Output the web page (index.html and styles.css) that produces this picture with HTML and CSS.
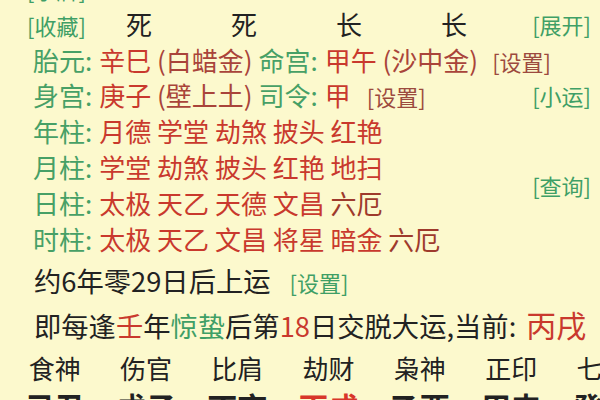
FILE: index.html
```html
<!DOCTYPE html>
<html lang="zh-CN">
<head>
<meta charset="utf-8">
<title>排盘</title>
<link rel="stylesheet" href="styles.css">
</head>
<body>
<main class="page">
  <section class="sheet">
    <div class="row at-1 top"><span class="link green">[字牌]</span></div>
    <div class="row at-2 top">
      <span class="link green head-link">[收藏]</span><span class="cell">死</span><span class="cell">死</span><span class="cell">长</span><span class="cell">长</span>
    </div>
    <div class="side at-2"><span class="link green">[展开]</span></div>

    <div class="row at-3"><span class="lbl">胎元:</span><span class="val">辛巳</span> <span class="paren">(白蜡金)</span> <span class="lbl">命宫:</span><span class="val">甲午</span> <span class="paren">(沙中金)</span><span class="link brown set">[设置]</span></div>

    <div class="row at-4"><span class="lbl">身宫:</span><span class="val">庚子</span> <span class="paren">(壁上土)</span> <span class="lbl">司令:</span><span class="val">甲</span><span class="link brown set set-2">[设置]</span></div>
    <div class="side at-4"><span class="link green">[小运]</span></div>

    <div class="row at-5"><span class="lbl">年柱:</span><span class="val">月德 学堂 劫煞 披头 红艳</span></div>
    <div class="row at-6"><span class="lbl">月柱:</span><span class="val">学堂 劫煞 披头 红艳 地扫</span></div>
    <div class="side span-6-8"><span class="link green">[查询]</span></div>
    <div class="row at-7"><span class="lbl">日柱:</span><span class="val">太极 天乙 天德 文昌 <span class="dark">六厄</span></span></div>
    <div class="row at-8"><span class="lbl">时柱:</span><span class="val">太极 天乙 文昌 将星 暗金 <span class="dark">六厄</span></span></div>
  </section>

  <section class="lower">
    <div class="line run">约6年零29日后上运<span class="link green run-set">[设置]</span></div>
    <div class="line dayun">即每逢<span class="red">壬</span>年<span class="green">惊蛰</span>后第<span class="red">18</span>日交脱大运,当前: <span class="red now">丙戌</span></div>
    <div class="gods">
      <span>食神</span><span>伤官</span><span>比肩</span><span>劫财</span><span>枭神</span><span>正印</span><span>七杀</span>
    </div>
    <div class="gods pillars">
      <span>己丑</span><span>戊子</span><span>丁亥</span><span class="red">丙戌</span><span>乙酉</span><span>甲申</span><span>癸未</span>
    </div>
  </section>
</main>
</body>
</html>
```
FILE: styles.css
```css
html, body {
  margin: 0;
  padding: 0;
}
body {
  width: 600px;
  height: 400px;
  overflow: hidden;
  background: #fcf9cd;
  font-family: "Noto Sans CJK SC", "Noto Sans", sans-serif;
  color: #2a2a2a;
}
.page {
  width: 600px;
}
.sheet {
  display: grid;
  grid-template-columns: 1fr 80px;
  grid-auto-rows: 35.8px;
  margin-top: -30px;
}
.row {
  grid-column: 1 / -1;
  padding-left: 33px;
  font-size: 26px;
  line-height: 35.8px;
  white-space: nowrap;
}
.row.top {
  padding-left: 27px;
}
.at-1 { grid-row: 1; }
.at-2 { grid-row: 2; }
.at-3 { grid-row: 3; }
.at-4 { grid-row: 4; }
.at-5 { grid-row: 5; }
.at-6 { grid-row: 6; }
.at-7 { grid-row: 7; }
.at-8 { grid-row: 8; }
.span-6-8 { grid-row: 6 / 8; }

.side {
  grid-column: 2;
  align-self: center;
  justify-self: end;
  padding-right: 9px;
  line-height: 1;
}

.link {
  font-size: 22px;
}
.green { color: #3f9f66; }
.brown { color: #9c4a3e; }
.red { color: #c9392d; }

.head-link {
  display: inline-block;
  width: 59.5px;
}
.cell {
  display: inline-block;
  width: 105px;
  text-align: center;
  color: #222;
}

.lbl {
  color: #47a066;
  margin-right: 7px;
}
.val {
  color: #c9392d;
}
.val .dark {
  color: #9e3a2c;
}
.paren {
  color: #a9443a;
}
.set {
  margin-left: 14px;
}
.set.set-2 {
  margin-left: 16px;
}

.lower {
  padding-top: 3px;
}
.line {
  height: 43.5px;
  line-height: 43.5px;
  padding-left: 34px;
  font-size: 27.3px;
  white-space: nowrap;
  color: #222;
}
.run-set {
  margin-left: 19px;
}
.now {
  font-size: 30px;
  margin-left: 4px;
}
.gods {
  display: grid;
  grid-template-columns: repeat(7, 91.3px);
  padding-left: 9px;
  height: 43.5px;
  align-items: center;
  font-size: 26px;
  line-height: 1;
  white-space: nowrap;
  color: #222;
}
.gods span {
  text-align: center;
}
.pillars {
  height: 32px;
  font-size: 30px;
  font-weight: 700;
}
.pillars .red {
  color: #d8362a;
}
```
